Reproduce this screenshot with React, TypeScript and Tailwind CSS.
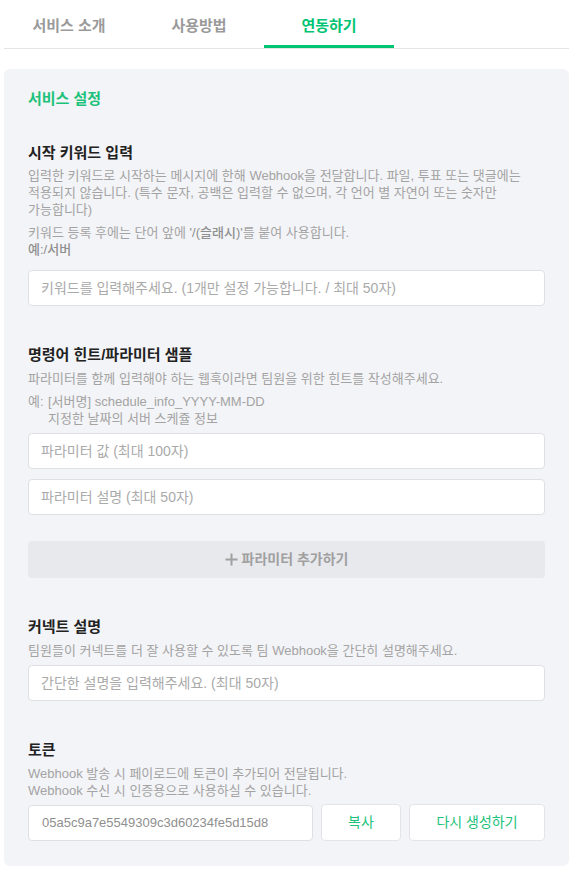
import { useState } from "react";

const FONT = { fontFamily: '"Liberation Sans", "Noto Sans CJK KR", sans-serif' };

const TABS = ["서비스 소개", "사용방법", "연동하기"];

function Field({ placeholder }: { placeholder: string }) {
  return (
    <input
      className="h-9 w-full rounded border border-[#dfe0e4] bg-white px-3 text-[14px] text-[#666] placeholder:text-[#aaaaaa] outline-none"
      placeholder={placeholder}
    />
  );
}

function Title({ children }: { children: string }) {
  return <h3 className="text-[15px] font-semibold leading-[22px] text-[#222]">{children}</h3>;
}

export default function App() {
  const [tab, setTab] = useState(2);

  return (
    <div className="min-h-screen bg-white pl-1 pr-px" style={FONT}>
      <div className="flex border-b border-[#e4e4e4]">
        {TABS.map((t, i) => (
          <button
            key={t}
            onClick={() => setTab(i)}
            className={`relative h-12 w-[130px] pt-1 text-[15px] font-semibold ${
              tab === i ? "text-[#00c473]" : "text-[#9a9a9a]"
            }`}
          >
            {t}
            {tab === i && <span className="absolute bottom-0 left-0 h-[3px] w-full bg-[#00c473]" />}
          </button>
        ))}
      </div>

      <div className="mt-5 w-[565px] rounded-md bg-[#f3f4f7] px-6 pb-[25px] pt-[19px]">
        <div className="text-[15px] font-semibold leading-[22px] text-[#1cc27a]">서비스 설정</div>

        {/* 시작 키워드 */}
        <div className="mt-8">
          <Title>시작 키워드 입력</Title>
          <p className="mt-[3px] text-[13px] leading-[17px] text-[#a3a3a3]">
            입력한 키워드로 시작하는 메시지에 한해 Webhook을 전달합니다. 파일, 투표 또는 댓글에는
            <br />
            적용되지 않습니다. (특수 문자, 공백은 입력할 수 없으며, 각 언어 별 자연어 또는 숫자만
            <br />
            가능합니다)
          </p>
          <p className="mt-[6px] text-[13px] leading-[17px] text-[#a3a3a3]">
            키워드 등록 후에는 단어 앞에 <b className="font-medium text-[#8f8f8f]">'/(슬래시)'</b>를 붙여 사용합니다.
            <br />
            <span className="font-medium text-[#8f8f8f]">예:/서버</span>
          </p>
          <div className="mt-3">
            <Field placeholder="키워드를 입력해주세요. (1개만 설정 가능합니다. / 최대 50자)" />
          </div>
        </div>

        {/* 명령어 힌트 */}
        <div className="mt-[38px]">
          <Title>명령어 힌트/파라미터 샘플</Title>
          <p className="mt-1 text-[13px] leading-[17px] text-[#a3a3a3]">
            파라미터를 함께 입력해야 하는 웹훅이라면 팀원을 위한 힌트를 작성해주세요.
          </p>
          <div className="mt-[6px] flex text-[13px] leading-[17px] text-[#a3a3a3]">
            <span className="w-5 shrink-0">예:</span>
            <div>
              <div>[서버명] schedule_info_YYYY-MM-DD</div>
              <div>지정한 날짜의 서버 스케쥴 정보</div>
            </div>
          </div>
          <div className="mt-[6px] flex flex-col gap-2.5">
            <Field placeholder="파라미터 값 (최대 100자)" />
            <Field placeholder="파라미터 설명 (최대 50자)" />
          </div>
          <button className="mt-[26px] flex h-[37px] w-full items-center justify-center gap-1 rounded bg-[#e8e9ed] text-[14px] font-semibold text-[#a0a0a0]">
            <svg width="13" height="13" viewBox="0 0 13 13" fill="none">
              <path d="M6.5 0.5v12M0.5 6.5h12" stroke="#a0a0a0" strokeWidth="2" />
            </svg>
            파라미터 추가하기
          </button>
        </div>

        {/* 커넥트 설명 */}
        <div className="mt-[38px]">
          <Title>커넥트 설명</Title>
          <p className="mt-1 text-[13px] leading-[17px] text-[#a3a3a3]">
            팀원들이 커넥트를 더 잘 사용할 수 있도록 팀 Webhook을 간단히 설명해주세요.
          </p>
          <div className="mt-[6px]">
            <Field placeholder="간단한 설명을 입력해주세요. (최대 50자)" />
          </div>
        </div>

        {/* 토큰 */}
        <div className="mt-[38px]">
          <Title>토큰</Title>
          <p className="mt-1 text-[13px] leading-[17px] text-[#a3a3a3]">
            Webhook 발송 시 페이로드에 토큰이 추가되어 전달됩니다.
            <br />
            Webhook 수신 시 인증용으로 사용하실 수 있습니다.
          </p>
          <div className="mt-[5px] flex items-center gap-2">
            <div className="flex h-9 flex-1 items-center rounded border border-[#dfe0e4] bg-white px-[13px] text-[13px] text-[#8f8f8f]">
              05a5c9a7e5549309c3d60234fe5d15d8
            </div>
            <button className="h-[37px] w-[80px] rounded border border-[#e3e4e8] bg-white text-[14px] text-[#1cc27a]">
              복사
            </button>
            <button className="h-[37px] w-[136px] rounded border border-[#e3e4e8] bg-white text-[14px] text-[#1cc27a]">
              다시 생성하기
            </button>
          </div>
        </div>
      </div>
    </div>
  );
}
